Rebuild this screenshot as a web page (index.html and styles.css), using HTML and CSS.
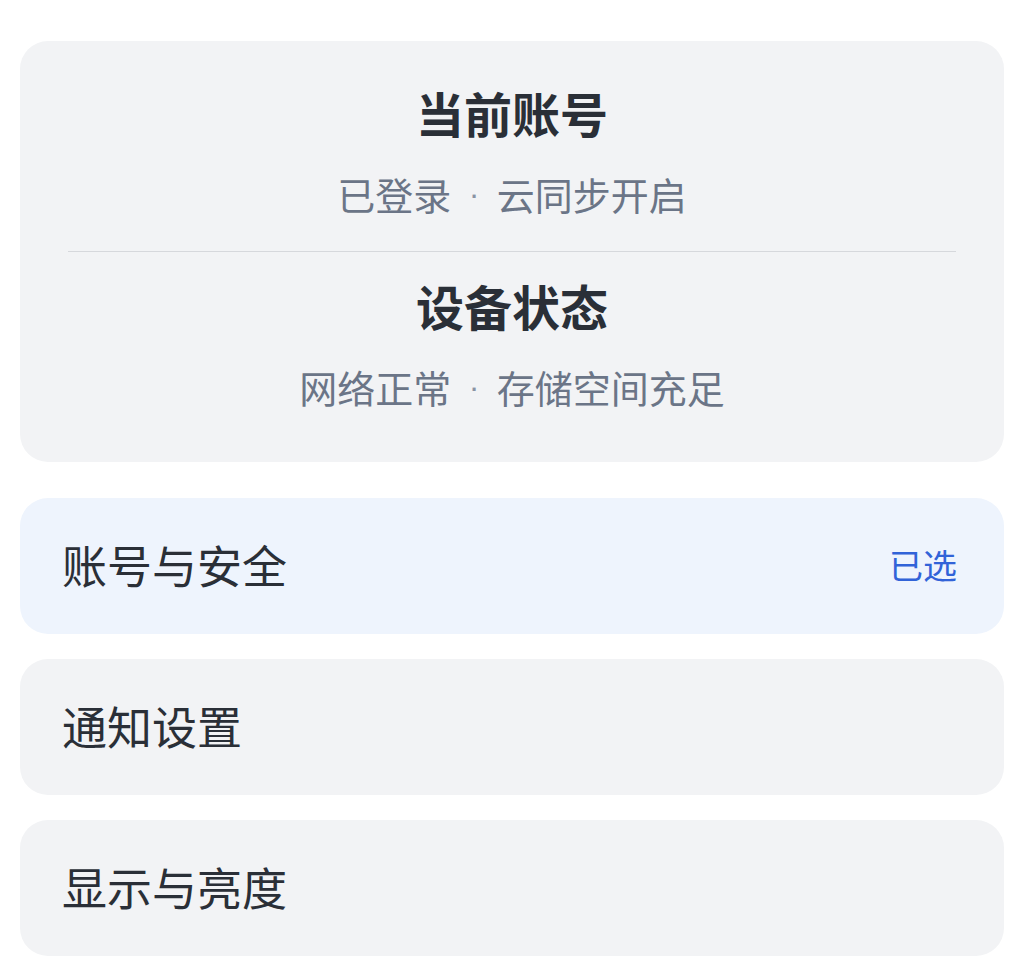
FILE: index.html
```html
<!DOCTYPE html>
<html lang="zh-CN">
<head>
<meta charset="utf-8">
<title>设置</title>
<link rel="stylesheet" href="styles.css">
</head>
<body>
<main class="page">
  <section class="status-card">
    <div class="status-section first">
      <div class="status-title">当前账号</div>
      <div class="status-sub">已登录 <span class="sep">·</span> 云同步开启</div>
    </div>
    <div class="status-section second">
      <div class="status-title">设备状态</div>
      <div class="status-sub">网络正常 <span class="sep">·</span> 存储空间充足</div>
    </div>
  </section>
  <ul class="menu">
    <li class="menu-item selected"><span class="menu-label">账号与安全</span><span class="menu-badge">已选</span></li>
    <li class="menu-item"><span class="menu-label">通知设置</span></li>
    <li class="menu-item"><span class="menu-label">显示与亮度</span></li>
  </ul>
</main>
</body>
</html>
```

FILE: styles.css
```css
html, body {
  margin: 0;
  padding: 0;
  background: #ffffff;
}

body {
  font-family: "Noto Sans CJK SC", "Noto Sans", sans-serif;
  color: #2a2f37;
}

.page {
  padding: 41px 32px 0 20px;
}

.status-card {
  background: #f2f3f5;
  border-radius: 28px;
  padding: 39px 48px 49px;
}

.status-section {
  text-align: center;
}

.status-section.first {
  padding-bottom: 31px;
  border-bottom: 1px solid #d6d8dc;
}

.status-section.second {
  padding-top: 21px;
}

.status-title {
  font-size: 48px;
  line-height: 64px;
  font-weight: 700;
  color: #2a2f37;
  margin-bottom: 24px;
}

.status-sub {
  font-size: 38px;
  line-height: 52px;
  color: #6b7587;
}

.sep {
  font-family: "Liberation Sans", sans-serif;
  font-size: 32px;
  line-height: 0;
  vertical-align: 5px;
  color: #8a93a3;
  margin: 0 9px;
}

.menu {
  list-style: none;
  margin: 36px 0 0;
  padding: 0;
  display: flex;
  flex-direction: column;
  gap: 25px;
}

.menu-item {
  height: 136px;
  box-sizing: border-box;
  border-radius: 28px;
  background: #f2f3f5;
  padding: 0 47px 3px 42px;
  display: flex;
  align-items: center;
  justify-content: space-between;
}

.menu-item.selected {
  background: #eef4fd;
}

.menu-label {
  font-size: 45px;
  line-height: 60px;
  color: #2a2f37;
}

.menu-badge {
  font-size: 34px;
  line-height: 48px;
  color: #3163d8;
}
```
